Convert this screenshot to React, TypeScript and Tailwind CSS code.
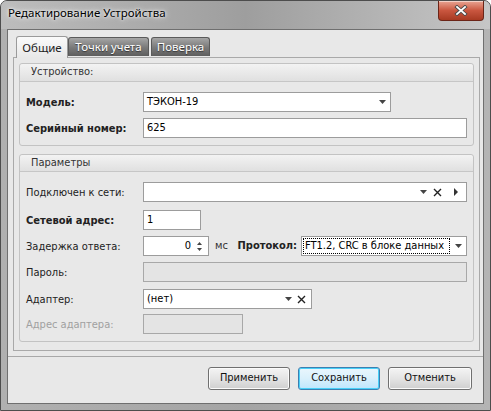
import React from "react";

const Arrow = () => (
  <svg width="7" height="4" viewBox="0 0 7 4" className="shrink-0">
    <polygon points="0,0 7,0 3.5,4" fill="#444" />
  </svg>
);

const XIcon = () => (
  <svg width="9" height="9" viewBox="0 0 9 9" className="shrink-0">
    <path d="M1 1 L8 8 M8 1 L1 8" stroke="#222" strokeWidth="1.4" />
  </svg>
);

const RightTri = () => (
  <svg width="4" height="8" viewBox="0 0 4 8" className="shrink-0">
    <polygon points="0,0 4,4 0,8" fill="#333" />
  </svg>
);

const Label = ({ children, bold, disabled }: { children: React.ReactNode; bold?: boolean; disabled?: boolean }) => (
  <div
    className={
      "w-[117px] shrink-0 text-[11px] leading-none whitespace-nowrap " +
      (bold ? "font-bold text-[#222] " : "text-[#222] ") +
      (disabled ? "!text-[#a0a0a0]" : "")
    }
  >
    {children}
  </div>
);

const GroupHeader = ({ children, h }: { children: React.ReactNode; h: string }) => (
  <div
    className={
      h +
      " flex items-center pl-[11px] border-b border-[#c6c6c6] bg-gradient-to-b from-[#f3f3f3] to-[#e0e0e0] rounded-t-[3px] text-[11px] text-[#333]"
    }
  >
    {children}
  </div>
);

export default function App() {
  return (
    <div className="w-[491px] h-[411px] flex flex-col border border-[#4d4d4d] rounded-t-[7px] overflow-hidden bg-gradient-to-r from-[#b0b0b0] via-[#a4a4a4] to-[#b4b4b4] font-['DejaVu_Sans',sans-serif] [font-stretch:condensed]">
      {/* title bar */}
      <div className="h-[28px] flex items-start shrink-0 bg-gradient-to-r from-[#bdbdbd] via-[#9e9e9e] to-[#c6c6c6]">
        <div className="pl-[7px] pt-[6px] text-[11.5px] leading-none text-black font-['Noto_Sans',sans-serif] [font-stretch:normal] [text-shadow:0_0_6px_#ffffff,0_0_3px_#ffffff]">
          Редактирование Устройства
        </div>
        <div className="ml-auto mr-[6px] w-[46px] h-[20px] rounded-b-[4px] border border-t-0 border-[#6b2417] bg-gradient-to-b from-[#e8a493] via-[#c9563f] to-[#a73a22] flex items-center justify-center shadow-[inset_0_1px_0_rgba(255,255,255,0.5)]">
          <svg width="14" height="11" viewBox="0 0 14 11">
            <path d="M3 2 L11 9 M11 2 L3 9" stroke="#4a4a4a" strokeWidth="3.6" strokeLinecap="square" />
            <path d="M3 2 L11 9 M11 2 L3 9" stroke="#ffffff" strokeWidth="1.8" strokeLinecap="square" />
          </svg>
        </div>
      </div>

      {/* content */}
      <div className="mx-[6px] mb-[6px] flex-1 flex flex-col border border-[#6f6f6f] bg-[#e8e8e8]">
        {/* top section with tabs */}
        <div className="pt-[6px] pb-[5px] border-b border-[#a8a8a8] flex flex-col">
          {/* tab strip */}
          <div className="h-[21px] flex items-start pl-[8px]">
            <div className="relative z-10 w-[52px] h-[22px] border border-b-0 border-[#9a9a9a] rounded-t-[3px] bg-gradient-to-b from-[#fafafa] to-[#e8e8e8] flex items-center justify-center text-[11.5px] text-[#222] font-['Noto_Sans',sans-serif] [font-stretch:normal]">
              Общие
            </div>
            <div className="mt-[1px] w-[81px] h-[19px] border border-b-0 border-[#5a5a5a] rounded-t-[3px] bg-gradient-to-b from-[#a6a6a6] via-[#7c7c7c] to-[#5e5e5e] flex items-center justify-center text-[11.5px] text-white font-['Noto_Sans',sans-serif] [font-stretch:normal] [text-shadow:0_1px_1px_#333]">
              Точки учета
            </div>
            <div className="mt-[1px] ml-[2px] w-[59px] h-[19px] border border-b-0 border-[#5a5a5a] rounded-t-[3px] bg-gradient-to-b from-[#a6a6a6] via-[#7c7c7c] to-[#5e5e5e] flex items-center justify-center text-[11.5px] text-white font-['Noto_Sans',sans-serif] [font-stretch:normal] [text-shadow:0_1px_1px_#333]">
              Поверка
            </div>
          </div>

          {/* tab page */}
          <div className="ml-[5px] mr-[3px] border border-[#a9a9a9] bg-[#e8e8e8] px-[5px] pt-[5px] pb-[8px]">
            {/* group 1 */}
            <div className="border border-[#c3c3c3] rounded-[3px] bg-[#e8e8e8]">
              <GroupHeader h="h-[18px]">Устройство:</GroupHeader>
              <div className="px-[6px] pt-[10px] pb-[7px] flex flex-col gap-[6px]">
                <div className="flex items-center h-[20px]">
                  <Label bold>Модель:</Label>
                  <div className="w-[248px] h-[20px] bg-white border border-[#9c9c9c] flex items-center pl-[3px] pr-[4px] text-[11px] text-black">
                    <span className="flex-1">ТЭКОН-19</span>
                    <Arrow />
                  </div>
                </div>
                <div className="flex items-center h-[20px]">
                  <Label bold>Серийный номер:</Label>
                  <div className="flex-1 h-[20px] bg-white border border-[#9c9c9c] flex items-center pl-[3px] text-[11px] text-black">
                    625
                  </div>
                </div>
              </div>
            </div>

            {/* group 2 */}
            <div className="mt-[8px] border border-[#c3c3c3] rounded-[3px] bg-[#e8e8e8]">
              <GroupHeader h="h-[17px]">Параметры</GroupHeader>
              <div className="px-[6px] pt-[10px] pb-[7px] flex flex-col">
                <div className="flex items-center h-[20px]">
                  <Label>Подключен к сети:</Label>
                  <div className="flex-1 h-[20px] bg-white border border-[#9c9c9c] flex items-center pl-[3px] pr-[8px] text-[11px] text-black">
                    <span className="flex-1"></span>
                    <Arrow />
                    <span className="ml-[6px]"><XIcon /></span>
                    <span className="ml-[12px]"><RightTri /></span>
                  </div>
                </div>
                <div className="mt-[8px] flex items-center h-[20px]">
                  <Label bold>Сетевой адрес:</Label>
                  <div className="w-[58px] h-[20px] bg-white border border-[#9c9c9c] flex items-center pl-[3px] text-[11px] text-black">
                    1
                  </div>
                </div>
                <div className="mt-[6px] flex items-center h-[20px]">
                  <Label>Задержка ответа:</Label>
                  <div className="w-[66px] h-[20px] bg-white border border-[#9c9c9c] flex items-center pr-[6px] text-[11px] text-black">
                    <span className="flex-1 text-right pr-[6px]">0</span>
                    <div className="flex flex-col gap-[3px]">
                      <svg width="5" height="3" viewBox="0 0 5 3"><polygon points="0,3 5,3 2.5,0" fill="#444" /></svg>
                      <svg width="5" height="3" viewBox="0 0 5 3"><polygon points="0,0 5,0 2.5,3" fill="#444" /></svg>
                    </div>
                  </div>
                  <span className="ml-[6px] text-[11px] text-[#333]">мс</span>
                  <span className="ml-auto mr-[4px] text-[11px] font-bold text-[#222]">Протокол:</span>
                  <div className="w-[166px] h-[20px] bg-white border border-[#9c9c9c] flex items-center pl-[1px] pr-[4px] text-[11px] text-black">
                    <span className="flex-1 h-[16px] border border-dotted border-black flex items-center pl-[1px] mr-[5px] whitespace-nowrap overflow-hidden">
                      FT1.2, CRC в блоке данных
                    </span>
                    <Arrow />
                  </div>
                </div>
                <div className="mt-[6px] flex items-center h-[20px]">
                  <Label>Пароль:</Label>
                  <div className="flex-1 h-[20px] bg-[#e4e4e4] border border-[#a8a8a8]"></div>
                </div>
                <div className="mt-[7px] flex items-center h-[20px]">
                  <Label>Адаптер:</Label>
                  <div className="w-[169px] h-[20px] bg-white border border-[#9c9c9c] flex items-center pl-[3px] pr-[5px] text-[11px] text-black">
                    <span className="flex-1">(нет)</span>
                    <Arrow />
                    <span className="ml-[5px]"><XIcon /></span>
                  </div>
                </div>
                <div className="mt-[5px] flex items-center h-[20px]">
                  <Label disabled>Адрес адаптера:</Label>
                  <div className="w-[100px] h-[20px] bg-[#e4e4e4] border border-[#a8a8a8]"></div>
                </div>
              </div>
            </div>
          </div>
        </div>

        {/* buttons */}
        <div className="flex justify-end gap-[8px] pt-[10px] pr-[11px]">
          <button className="w-[82px] h-[23px] rounded-[3px] border border-[#707070] bg-gradient-to-b from-[#f4f4f4] via-[#e4e4e4] to-[#cfcfcf] text-[11px] text-[#111] shadow-[inset_0_0_0_1px_#fbfbfb]">
            Применить
          </button>
          <button className="w-[82px] h-[23px] rounded-[3px] border border-[#3c7fb1] bg-gradient-to-b from-[#eaf6fd] via-[#d9f0fc] to-[#bee6fd] text-[11px] text-[#111] shadow-[inset_0_0_0_1px_#48d0f8]">
            Сохранить
          </button>
          <button className="w-[84px] h-[23px] rounded-[3px] border border-[#707070] bg-gradient-to-b from-[#f4f4f4] via-[#e4e4e4] to-[#cfcfcf] text-[11px] text-[#111] shadow-[inset_0_0_0_1px_#fbfbfb]">
            Отменить
          </button>
        </div>
      </div>
    </div>
  );
}
